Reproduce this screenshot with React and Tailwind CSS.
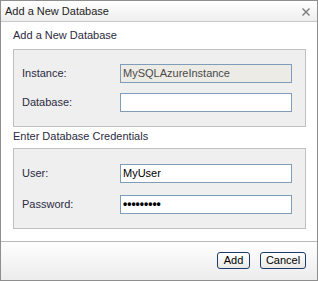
export default function App() {
  const row = "flex items-center h-[19px]";
  const label = "w-[98px] text-[#2b2b3f]";
  const input = "w-[172px] h-[19px] border border-[#7f9db9] flex items-center px-[2px] leading-[17px]";
  return (
    <div className="w-[318px] h-[281px] border border-[#8e8e8e] flex flex-col bg-white text-[11px] leading-[13px] font-['Liberation_Sans',Arial,sans-serif] text-[#222]">
      <div className="h-[21px] shrink-0 border-b border-[#c8c8c8] bg-gradient-to-b from-white to-[#eeeeee] flex items-center justify-between pl-[4px] pr-[7px]">
        <span className="text-[#1e1e1e]">Add a New Database</span>
        <svg width="8" height="8" viewBox="0 0 8 8" className="mt-[1px]">
          <path d="M0.5 0.5 L7.5 7.5 M7.5 0.5 L0.5 7.5" stroke="#7a7a7a" strokeWidth="1.4" />
        </svg>
      </div>
      <div className="h-[219px] shrink-0 pl-[12px] pr-[11px] pt-[7px] flex flex-col">
        <div className="h-[13px] text-[#2b2b3f]">Add a New Database</div>
        <div className="mt-[7px] h-[78px] border border-[#c0c0c0] bg-[#efefef] pt-[14px] pl-[8px] flex flex-col gap-[10px]">
          <div className={row}>
            <div className={label}>Instance:</div>
            <div className={input + " bg-[#ecebe5] text-[#4a4a4a]"}>MySQLAzureInstance</div>
          </div>
          <div className={row}>
            <div className={label}>Database:</div>
            <div className={input + " bg-white"}></div>
          </div>
        </div>
        <div className="mt-[3px] h-[13px] text-[#2b2b3f]">Enter Database Credentials</div>
        <div className="mt-[5px] h-[81px] border border-[#c0c0c0] bg-[#efefef] pt-[15px] pl-[8px] flex flex-col gap-[12px]">
          <div className={row}>
            <div className={label}>User:</div>
            <div className={input + " bg-white text-black"}>MyUser</div>
          </div>
          <div className={row}>
            <div className={label}>Password:</div>
            <div className={input + " bg-white text-black text-[12px] font-bold"}>•••••••••</div>
          </div>
        </div>
      </div>
      <div className="h-[39px] shrink-0 border-t border-[#b8b8b8] bg-gradient-to-b from-white to-[#ececec] flex justify-end items-start pt-[10px] pr-[11px] gap-[10px]">
        <div className="w-[33px] h-[17px] border border-[#1d3a6a] rounded-[3px] bg-gradient-to-b from-white to-[#e8e8e4] flex items-center justify-center text-black">Add</div>
        <div className="w-[46px] h-[17px] border border-[#1d3a6a] rounded-[3px] bg-gradient-to-b from-white to-[#e8e8e4] flex items-center justify-center text-black">Cancel</div>
      </div>
    </div>
  );
}
